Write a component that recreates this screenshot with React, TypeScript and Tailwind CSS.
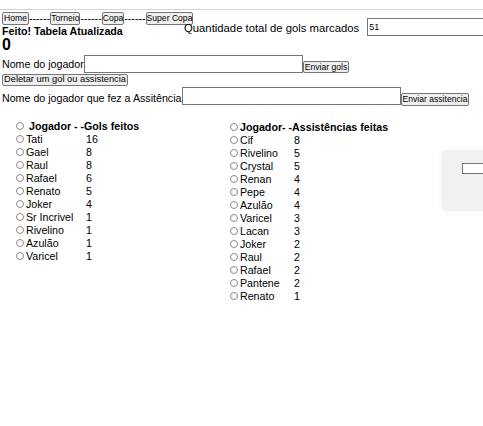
import React from "react";

const Btn = ({ children, className = "" }: { children: React.ReactNode; className?: string }) => (
  <span
    className={
      "inline-flex items-center justify-center h-[12px] px-0 border border-[#767676] bg-[#efefef] rounded-[2px] text-[8.6px] leading-none text-black whitespace-nowrap " +
      className
    }
  >
    {children}
  </span>
);

const Radio = () => (
  <span className="inline-block w-[8px] h-[8px] rounded-full border border-[#8a8a8a] bg-white shrink-0" />
);

const gols: [string, string][] = [
  ["Tati", "16"],
  ["Gael", "8"],
  ["Raul", "8"],
  ["Rafael", "6"],
  ["Renato", "5"],
  ["Joker", "4"],
  ["Sr Incrivel", "1"],
  ["Rivelino", "1"],
  ["Azulão", "1"],
  ["Varicel", "1"],
];

const assists: [string, string][] = [
  ["Cif", "8"],
  ["Rivelino", "5"],
  ["Crystal", "5"],
  ["Renan", "4"],
  ["Pepe", "4"],
  ["Azulão", "4"],
  ["Varicel", "3"],
  ["Lacan", "3"],
  ["Joker", "2"],
  ["Raul", "2"],
  ["Rafael", "2"],
  ["Pantene", "2"],
  ["Renato", "1"],
];

export default function App() {
  return (
    <div
      className="relative w-[483px] h-[426px] overflow-hidden bg-white text-black text-[10.67px] leading-[13px]"
      style={{ fontFamily: '"Liberation Sans", Arial, sans-serif' }}
    >
      <div className="h-[9px]" />
      <div className="h-[1px] bg-[#d3d3d3]" />

      {/* top section */}
      <div className="flex whitespace-nowrap">
        <div className="w-[184px] shrink-0">
          <div className="mt-[2px] ml-[2px] flex items-center h-[13px]">
            <Btn className="h-[13px] px-[1px]">Home</Btn>
            <span>------</span>
            <Btn className="h-[13px]">Torneio</Btn>
            <span>------</span>
            <Btn className="h-[13px]">Copa</Btn>
            <span>------</span>
            <Btn className="h-[13px]">Super Copa</Btn>
          </div>
          <div className="ml-[2px] font-bold leading-[12px]">Feito! Tabela Atualizada</div>
          <div className="ml-[2px] font-bold text-[16px] leading-[16px]">0</div>
        </div>
        <div className="mt-[8px] flex items-center gap-[8px] h-[18px]">
          <span className="text-[11.3px] pt-[2px]">Quantidade total de gols marcados</span>
          <span className="inline-flex items-center w-[219px] h-[18px] border border-[#767676] px-[1px] text-[9px] shrink-0">
            51
          </span>
        </div>
      </div>

      {/* row nome do jogador */}
      <div className="mt-[2px] ml-[2px] flex items-start whitespace-nowrap">
        <span className="mt-[3px]">Nome do jogador</span>
        <span className="w-[219px] h-[18px] border border-[#767676] shrink-0" />
        <Btn className="mt-[6px] px-[1px]">Enviar gols</Btn>
      </div>

      <div className="mt-[1px] ml-[2px] flex">
        <Btn className="text-[9.3px] px-[1px]">Deletar um gol ou assistencia</Btn>
      </div>

      <div className="mt-[1px] ml-[2px] flex items-start whitespace-nowrap">
        <span className="mt-[5px]">Nome do jogador que fez a Assitência</span>
        <span className="w-[219px] h-[18px] border border-[#767676] shrink-0" />
        <Btn className="mt-[6px] h-[13px] px-[1px]">Enviar assitencia</Btn>
      </div>

      {/* tables */}
      <div className="flex whitespace-nowrap">
        <div className="mt-[14px] ml-[14px] w-[214px] shrink-0">
          <div className="flex items-center h-[13px] font-bold">
            <span className="ml-[2px]"><Radio /></span>
            <span className="ml-[5px]">Jogador - -Gols feitos</span>
          </div>
          {gols.map(([n, v]) => (
            <div key={n} className="flex items-center h-[13px]">
              <div className="w-[72px] flex items-center">
                <span className="ml-[2px]"><Radio /></span>
                <span className="ml-[2px]">{n}</span>
              </div>
              <span>{v}</span>
            </div>
          ))}
        </div>
        <div className="mt-[15px]">
          <div className="flex items-center h-[13px] font-bold">
            <span className="ml-[2px]"><Radio /></span>
            <span className="ml-[2px]">Jogador- -Assistências feitas</span>
          </div>
          {assists.map(([n, v]) => (
            <div key={n} className="flex items-center h-[13px]">
              <div className="w-[66px] flex items-center">
                <span className="ml-[2px]"><Radio /></span>
                <span className="ml-[2px]">{n}</span>
              </div>
              <span>{v}</span>
            </div>
          ))}
        </div>
      </div>

      {/* floating panel */}
      <div className="absolute left-[442px] top-[150px] w-[80px] h-[61px] rounded-[5px] bg-[#f1f1f1] shadow-[0_0_6px_rgba(0,0,0,0.06)]">
        <div className="ml-[20px] mt-[13px] w-[60px] h-[11px] bg-white border border-[#767676]" />
      </div>
    </div>
  );
}
